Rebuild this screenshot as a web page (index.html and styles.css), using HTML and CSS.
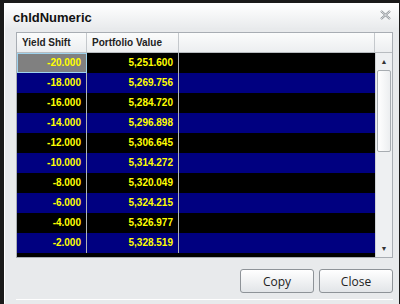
FILE: index.html
```html
<!DOCTYPE html>
<html lang="en">
  <head>
    <meta charset="UTF-8" />
    <title>chldNumeric</title>
    <link rel="stylesheet" href="styles.css">
  </head>
  <body>
    <div id="window">
      <div id="titlebar">
        <span class="title">chldNumeric</span>
        <svg class="closeX" width="11" height="10" viewBox="0 0 11 10">
          <path d="M1 1 L10 9 M10 1 L1 9" stroke="#8a8f94" stroke-width="2.2" fill="none"/>
          <path d="M1 1 L10 9 M10 1 L1 9" stroke="#f4f5f6" stroke-width="0.8" fill="none"/>
        </svg>
      </div>
      <div id="content">
        <div id="grid">
          <div class="head">
            <div class="hcell c1">Yield Shift</div>
            <div class="hcell c2">Portfolio Value</div>
            <div class="hcell c3"></div>
            <div class="hcell c4"></div>
          </div>
          <div class="gbody">
            <div id="rows"></div>
            <div class="scroll">
              <div class="sbtn">&#9650;</div>
              <div class="track"><div class="thumb"></div></div>
              <div class="sbtn">&#9660;</div>
            </div>
          </div>
        </div>
        <div id="buttons">
          <button class="btn">Copy</button>
          <button class="btn">Close</button>
        </div>
      </div>
    </div>
    <script>
      // 표시할 데이터
      const datas = [
        ["-20.000", "5,251.600"],
        ["-18.000", "5,269.756"],
        ["-16.000", "5,284.720"],
        ["-14.000", "5,296.898"],
        ["-12.000", "5,306.645"],
        ["-10.000", "5,314.272"],
        ["-8.000", "5,320.049"],
        ["-6.000", "5,324.215"],
        ["-4.000", "5,326.977"],
        ["-2.000", "5,328.519"],
      ];

      let rowStr = "";
      for (let i = 0; i < datas.length; i++) {
        let cls = i % 2 == 0 ? "row even" : "row odd";
        let sel = i == 0 ? " sel" : "";
        rowStr += `<div class="${cls}">`;
        rowStr += `<div class="cell c1${sel}">${datas[i][0]}</div>`;
        rowStr += `<div class="cell c2">${datas[i][1]}</div>`;
        rowStr += `<div class="cell c3"></div>`;
        rowStr += `</div>`;
      }
      document.querySelector("#rows").innerHTML = rowStr;
    </script>
  </body>
</html>
```

FILE: styles.css
```css
body {
  margin: 0;
  background-color: #1a1a1a;
  font-family: "Liberation Sans", Arial, sans-serif;
}

#window {
  width: 395px;
  height: 301px;
  margin: 3px 0 0 4px;
  border-top: 1px solid #ffffff;
  border-left: 1px solid #ffffff;
  background-color: #e8eaec;
  box-sizing: border-box;
}

#titlebar {
  height: 24px;
  display: flex;
  align-items: center;
  justify-content: space-between;
  padding: 0 8px 0 8px;
  background: linear-gradient(#ffffff, #e9ebed);
}

.title {
  font-size: 13px;
  font-weight: bold;
  color: #111;
  padding-top: 2px;
}

.closeX {
  margin-top: -2px;
}

#content {
  padding: 4px 6px 0 11px;
}

#grid {
  width: 377px;
  height: 226px;
  border: 1px solid #a8adb3;
  box-sizing: border-box;
  display: flex;
  flex-direction: column;
  background-color: #000;
}

.head {
  height: 19px;
  display: flex;
  background: linear-gradient(#fbfcfc, #eceef0);
  border-bottom: 1px solid #b8bcc0;
}

.hcell {
  font-size: 10px;
  font-weight: bold;
  color: #222;
  line-height: 19px;
  padding-left: 5px;
  box-sizing: border-box;
  border-right: 1px solid #c4c8cc;
}

.c1 {
  width: 70px;
}

.c2 {
  width: 92px;
}

.c3 {
  flex: 1;
}

.hcell.c4 {
  width: 17px;
  border-right: 0;
}

.gbody {
  flex: 1;
  display: flex;
}

#rows {
  flex: 1;
  background-color: #000;
}

.row {
  height: 20px;
  display: flex;
}

.even {
  background-color: #000000;
}

.odd {
  background-color: #000080;
}

.cell {
  height: 20px;
  line-height: 20px;
  font-size: 10px;
  font-weight: bold;
  color: #ffff00;
  text-align: right;
  padding-right: 5px;
  box-sizing: border-box;
  border-right: 1px solid #b0b4b8;
}

.cell.c3 {
  border-right: 0;
}

.sel {
  background-color: #808080;
  border: 1px solid #9fd3ee;
  line-height: 18px;
}

.scroll {
  width: 17px;
  display: flex;
  flex-direction: column;
  background-color: #eef0f2;
  border-left: 1px solid #d0d3d6;
  box-sizing: border-box;
}

.sbtn {
  height: 17px;
  font-size: 7px;
  line-height: 17px;
  text-align: center;
  color: #333;
}

.track {
  flex: 1;
  padding: 0 1px;
}

.thumb {
  height: 80px;
  border: 1px solid #a7acb1;
  border-radius: 2px;
  background: linear-gradient(to right, #ffffff, #eceef0);
}

#buttons {
  display: flex;
  justify-content: flex-end;
  gap: 5px;
  padding-top: 11px;
  padding-bottom: 6px;
  border-bottom: 1px solid #ffffff;
}

.btn {
  width: 74px;
  height: 24px;
  font-family: "Open Sans", "Liberation Sans", sans-serif;
  font-size: 12px;
  color: #222;
  border: 1px solid #8e9398;
  border-radius: 3px;
  background: linear-gradient(#ffffff, #e2e5e8);
}
```
